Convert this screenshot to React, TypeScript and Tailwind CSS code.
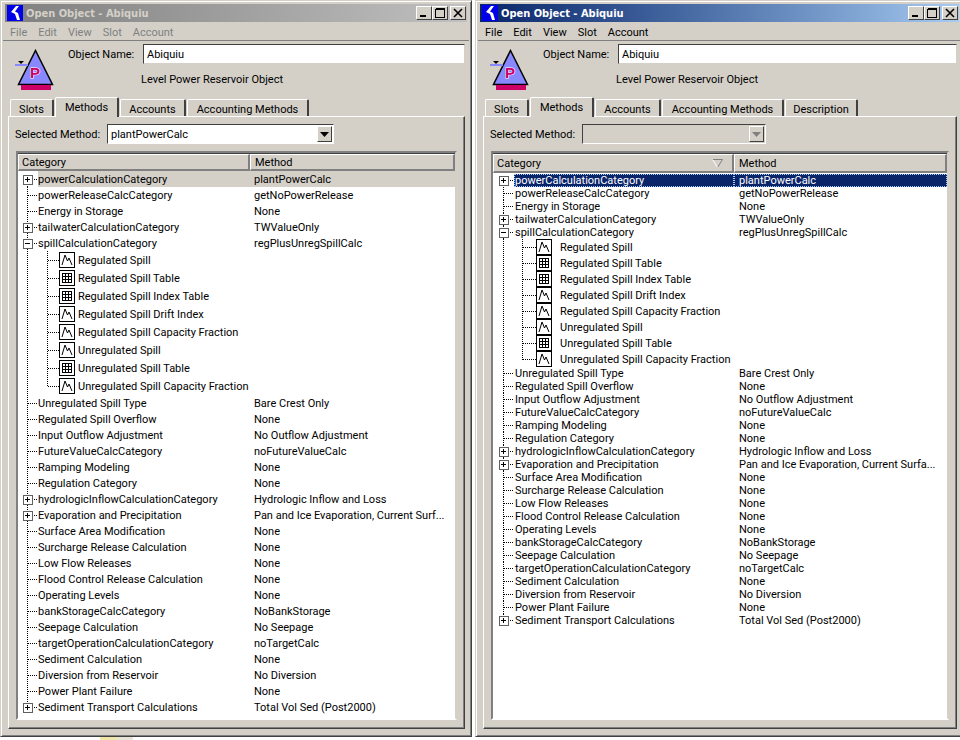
const FONT = "font-['Roboto','Liberation_Sans',Arial,sans-serif]"

type Child = { name: string; icon: "graph" | "table" }
type Row = { name: string; method: string; expander?: "plus" | "minus"; children?: Child[] }

const spillChildren: Child[] = [
  { name: "Regulated Spill", icon: "graph" },
  { name: "Regulated Spill Table", icon: "table" },
  { name: "Regulated Spill Index Table", icon: "table" },
  { name: "Regulated Spill Drift Index", icon: "graph" },
  { name: "Regulated Spill Capacity Fraction", icon: "graph" },
  { name: "Unregulated Spill", icon: "graph" },
  { name: "Unregulated Spill Table", icon: "table" },
  { name: "Unregulated Spill Capacity Fraction", icon: "graph" },
]

const rows = (evapMethod: string): Row[] => [
  { name: "powerCalculationCategory", method: "plantPowerCalc", expander: "plus" },
  { name: "powerReleaseCalcCategory", method: "getNoPowerRelease" },
  { name: "Energy in Storage", method: "None" },
  { name: "tailwaterCalculationCategory", method: "TWValueOnly", expander: "plus" },
  { name: "spillCalculationCategory", method: "regPlusUnregSpillCalc", expander: "minus", children: spillChildren },
  { name: "Unregulated Spill Type", method: "Bare Crest Only" },
  { name: "Regulated Spill Overflow", method: "None" },
  { name: "Input Outflow Adjustment", method: "No Outflow Adjustment" },
  { name: "FutureValueCalcCategory", method: "noFutureValueCalc" },
  { name: "Ramping Modeling", method: "None" },
  { name: "Regulation Category", method: "None" },
  { name: "hydrologicInflowCalculationCategory", method: "Hydrologic Inflow and Loss", expander: "plus" },
  { name: "Evaporation and Precipitation", method: evapMethod, expander: "plus" },
  { name: "Surface Area Modification", method: "None" },
  { name: "Surcharge Release Calculation", method: "None" },
  { name: "Low Flow Releases", method: "None" },
  { name: "Flood Control Release Calculation", method: "None" },
  { name: "Operating Levels", method: "None" },
  { name: "bankStorageCalcCategory", method: "NoBankStorage" },
  { name: "Seepage Calculation", method: "No Seepage" },
  { name: "targetOperationCalculationCategory", method: "noTargetCalc" },
  { name: "Sediment Calculation", method: "None" },
  { name: "Diversion from Reservoir", method: "No Diversion" },
  { name: "Power Plant Failure", method: "None" },
  { name: "Sediment Transport Calculations", method: "Total Vol Sed (Post2000)", expander: "plus" },
]

function Logo() {
  return (
    <svg width="16" height="16" viewBox="0 0 16 16" className="shrink-0">
      <rect width="16" height="16" fill="#0000e8" />
      <path d="M9 1 L4 7 L8 9 L10 15 L13 15 L11 8 L8 6.5 L12 1 Z" fill="#fff" />
    </svg>
  )
}

function ObjectIcon() {
  return (
    <svg width="40" height="42" viewBox="0 0 40 42" className="shrink-0">
      <path d="M20.5 1.5 L37.5 35.5 L3.5 35.5 Z" fill="#8888ff" stroke="#000" strokeWidth="1.5" />
      <rect x="6" y="36" width="30" height="5" fill="#cc0066" />
      <rect x="0" y="15" width="13" height="2" fill="#8888ff" />
      <path d="M3 12 H9 L6 15 Z" fill="#000" />
      <text x="15" y="29" fontSize="15" fontWeight="700" fill="#cc0066" stroke="#fff" strokeWidth="1" paintOrder="stroke" fontFamily="Liberation Sans, sans-serif">P</text>
    </svg>
  )
}

function WinButton({ kind }: { kind: "min" | "max" | "close" }) {
  return (
    <div className="w-[16px] h-[14px] bg-[#d4d0c8] border border-t-white border-l-white border-r-[#404040] border-b-[#404040] flex items-center justify-center">
      <svg width="10" height="10" viewBox="0 0 10 10" shapeRendering="crispEdges">
        {kind === "min" && <rect x="1" y="7" width="6" height="2" fill="#000" />}
        {kind === "max" && <path d="M0.5 1.5 H9.5 V9.5 H0.5 Z M0.5 0.5 H9.5" fill="none" stroke="#000" />}
        {kind === "close" && <path d="M1 1 L9 9 M9 1 L1 9" stroke="#000" strokeWidth="1.6" shapeRendering="auto" />}
      </svg>
    </div>
  )
}

function SeriesIcon({ icon }: { icon: "graph" | "table" }) {
  return (
    <svg width="16" height="16" viewBox="0 0 16 16" className="shrink-0" shapeRendering="crispEdges">
      <rect x="0.5" y="0.5" width="15" height="15" fill="#fff" stroke="#000" />
      {icon === "graph" ? (
        <path d="M3 13 L6 3 L8.5 9 L10 6 L13 13" fill="none" stroke="#000" shapeRendering="auto" />
      ) : (
        <path d="M3.5 3.5 H12.5 V12.5 H3.5 Z M3.5 6.5 H12.5 M3.5 9.5 H12.5 M6.5 3.5 V12.5 M9.5 3.5 V12.5" fill="none" stroke="#000" />
      )}
    </svg>
  )
}

// dotted tree lines + the expander box, drawn per row so rows can keep normal flow
function Gutter({
  width, height, axis, first, last, expander,
}: {
  width: number; height: number; axis: number; first?: boolean; last?: boolean; expander?: "plus" | "minus"
}) {
  const mid = Math.floor(height / 2) + 0.5
  const dots = { stroke: "#000", strokeDasharray: "1 1", fill: "none" }
  return (
    <svg width={width} height={height} className="shrink-0" shapeRendering="crispEdges">
      <path d={`M${axis + 0.5} ${first ? mid : 0} V${last ? mid : height}`} {...dots} />
      <path d={`M${axis + 0.5} ${mid} H${width}`} {...dots} />
      {expander && (
        <g>
          <rect x={axis - 4} y={mid - 4.5} width="9" height="9" fill="#fff" stroke="#606060" transform="translate(0.5 0)" />
          <path d={`M${axis - 2} ${mid} H${axis + 3}`} stroke="#000" />
          {expander === "plus" && <path d={`M${axis + 0.5} ${mid - 2.5} V${mid + 2.5}`} stroke="#000" />}
        </g>
      )}
    </svg>
  )
}

function ChildGutter({
  height, axis, sub, iconX, last,
}: {
  height: number; axis: number; sub: number; iconX: number; last: boolean
}) {
  const mid = Math.floor(height / 2) + 0.5
  const dots = { stroke: "#000", strokeDasharray: "1 1", fill: "none" }
  return (
    <svg width={iconX} height={height} className="shrink-0" shapeRendering="crispEdges">
      <path d={`M${axis + 0.5} 0 V${height}`} {...dots} />
      <path d={`M${sub + 0.5} 0 V${last ? mid : height}`} {...dots} />
      <path d={`M${sub + 0.5} ${mid} H${iconX}`} {...dots} />
    </svg>
  )
}

function Tab({ label, active, width }: { label: string; active?: boolean; width: string }) {
  if (active) {
    return (
      <div className={`${width} h-[20px] -mb-px relative z-10 bg-[#d4d0c8] border-t border-l border-white border-r-2 border-r-[#404040] rounded-t-[2px] flex items-center justify-center`}>
        {label}
      </div>
    )
  }
  return (
    <div className={`${width} h-[17px] bg-[#d4d0c8] border-t border-l border-white border-r-2 border-r-[#404040] rounded-t-[2px] flex items-center justify-center pt-[2px]`}>
      {label}
    </div>
  )
}

function Window({ focused }: { focused: boolean }) {
  // the two windows differ in tree density and focus state
  const rowH = focused ? 13 : 16
  const childH = focused ? 16 : 18
  const catW = focused ? "w-[241px]" : "w-[232px]"
  const gutterW = focused ? 21 : 20
  const axis = focused ? 10 : 9
  const sub = 29
  const iconX = focused ? 43 : 41
  const childLabel = focused ? "ml-[8px]" : "ml-[3px]"
  const data = rows(focused ? "Pan and Ice Evaporation, Current Surfa..." : "Pan and Ice Evaporation, Current Surf...")
  const menuText = focused ? "text-black" : "text-[#808080]"

  return (
    <div className={`${focused ? "w-[489px]" : "w-[472px]"} h-[737px] shrink-0 flex flex-col bg-[#d4d0c8] border border-t-[#d4d0c8] border-l-[#d4d0c8] border-r-[#404040] border-b-[#404040] shadow-[inset_1px_1px_0_#fff,inset_-1px_-1px_0_#808080] pt-[3px] pl-[4px] pr-[4px] pb-[1px]`}>
      <div className={`h-[18px] shrink-0 flex items-center pl-[2px] pr-[1px] ${focused ? "bg-gradient-to-r from-[#0a246a] to-[#a6caf0]" : "bg-gradient-to-r from-[#808080] to-[#c0c0c0]"}`}>
        <Logo />
        <span className={`ml-[3px] font-['DejaVu_Sans_Condensed','DejaVu_Sans',sans-serif] font-bold text-[11px] ${focused ? "text-white" : "text-[#d4d0c8]"}`}>Open Object - Abiquiu</span>
        <div className="ml-auto flex items-center">
          <WinButton kind="min" />
          <WinButton kind="max" />
          <div className="w-[2px]" />
          <WinButton kind="close" />
        </div>
      </div>

      <div className={`h-[18px] shrink-0 flex items-center pl-[5px] pt-[2px] gap-[11px] ${menuText}`}>
        <span>File</span>
        <span>Edit</span>
        <span>View</span>
        <span>Slot</span>
        <span>Account</span>
      </div>
      <div className="h-[2px] shrink-0 border-t border-[#808080] border-b-white -mx-[2px]" />

      <div className="flex shrink-0 h-[55px]">
        <div className="pl-[10px] pt-[7px] w-[63px]">
          <ObjectIcon />
        </div>
        <div className="flex-1 flex flex-col">
          <div className="flex items-center pt-[2px]">
            <span className="w-[75px]">Object Name:</span>
            <div className="flex-1 h-[20px] mr-[2px] bg-white border border-t-[#404040] border-l-[#404040] border-r-[#d4d0c8] border-b-[#d4d0c8] flex items-center pl-[3px]">Abiquiu</div>
          </div>
          <div className="pl-[73px] mt-[10px]">Level Power Reservoir Object</div>
        </div>
      </div>

      <div className="flex items-end shrink-0 pl-[5px] gap-[1px] h-[19px]">
        <Tab label="Slots" width="w-[44px]" />
        <Tab label="Methods" width="w-[64px]" active />
        <Tab label="Accounts" width="w-[66px]" />
        <Tab label="Accounting Methods" width="w-[122px]" />
        {focused && <Tab label="Description" width="w-[73px]" />}
      </div>

      <div className="flex-1 min-h-0 flex flex-col ml-[3px] mr-[2px] mb-[6px] border border-t-white border-l-white border-r-[#404040] border-b-[#404040] shadow-[inset_-1px_-1px_0_#808080] pt-[7px] pl-[6px] pr-[7px] pb-[8px]">
        <div className="flex items-center shrink-0 h-[20px]">
          <span className="w-[92px]">Selected Method:</span>
          <div className={`${focused ? "w-[184px]" : "w-[227px]"} h-[20px] flex items-center justify-between pl-[3px] border border-t-[#404040] border-l-[#404040] border-r-white border-b-white ${focused ? "bg-[#d4d0c8]" : "bg-white"}`}>
            <span>{focused ? "" : "plantPowerCalc"}</span>
            <div className="w-[15px] h-[16px] mr-[1px] flex items-center justify-center border border-t-white border-l-white border-r-[#404040] border-b-[#404040] bg-[#d4d0c8]">
              <svg width="9" height="5" viewBox="0 0 9 5">
                <path d="M0 0 H9 L4.5 5 Z" fill={focused ? "#808080" : "#000"} />
              </svg>
            </div>
          </div>
        </div>

        <div className="flex-1 min-h-0 mt-[7px] ml-[1px] flex flex-col border-2 border-t-[#808080] border-l-[#808080] border-r-[#d4d0c8] border-b-white shadow-[inset_0_1px_0_#404040,inset_1px_0_0_#404040]">
          <div className={`flex shrink-0 ${focused ? "h-[19px]" : "h-[17px]"} mt-px bg-[#d4d0c8]`}>
            <div className={`${catW} flex items-center justify-between pl-[3px] pr-[9px] border-r-2 border-r-[#808080] border-b-2 border-b-[#808080] border-t border-t-white border-l border-l-white`}>
              <span>Category</span>
              {focused && (
                <svg width="11" height="9" viewBox="0 0 11 9">
                  <path d="M0.5 0.5 H10.5 L5.5 8.5" fill="none" stroke="#808080" />
                  <path d="M0.5 0.5 L5.5 8.5" fill="none" stroke="#fff" />
                </svg>
              )}
            </div>
            <div className="flex-1 flex items-center pl-[4px] border-r-2 border-r-[#808080] border-b-2 border-b-[#808080] border-t border-t-white border-l border-l-white">Method</div>
          </div>

          <div className={`flex-1 min-h-0 bg-white ${focused ? "pt-[1px]" : ""}`}>
            {data.map((row, i) => {
              const selected = i === 0
              return (
                <div key={row.name}>
                  <div className="flex" style={{ height: rowH }}>
                    <div className={`${catW} flex shrink-0`}>
                      <Gutter width={gutterW} height={rowH} axis={axis} first={i === 0} last={i === data.length - 1} expander={row.expander} />
                      <span className={`flex-1 flex items-center whitespace-nowrap ${selected ? (focused ? "bg-[#0a246a] text-white outline-1 outline-dotted outline-offset-[-1px] outline-[#a6caf0]" : "bg-[#d4d0c8]") : ""} ${focused ? "pl-[1px]" : ""}`}>{row.name}</span>
                    </div>
                    <span className={`flex-1 flex items-center whitespace-nowrap pl-[4px] ${focused ? "pl-[5px]" : ""} ${selected ? (focused ? "bg-[#0a246a] text-white outline-1 outline-dotted outline-offset-[-1px] outline-[#a6caf0]" : "bg-[#d4d0c8]") : ""}`}>{row.method}</span>
                  </div>
                  {row.children?.map((c, j) => (
                    <div key={c.name} className="flex items-center" style={{ height: childH }}>
                      <ChildGutter height={childH} axis={axis} sub={sub} iconX={iconX} last={j === spillChildren.length - 1} />
                      <SeriesIcon icon={c.icon} />
                      <span className={`${childLabel} whitespace-nowrap`}>{c.name}</span>
                    </div>
                  ))}
                </div>
              )
            })}
          </div>
        </div>
      </div>
    </div>
  )
}

export default function App() {
  return (
    <div className={`${FONT} text-[11px] leading-none text-black w-[960px] h-[740px] overflow-hidden bg-white`}>
      <div className="flex gap-[3px]">
        <Window focused={false} />
        <Window focused />
      </div>
      <div className="ml-[100px] w-[33px] h-[3px] flex">
        <div className="flex-1 bg-[#f0e6a8]" />
        <div className="flex-1 bg-[#e8e4d8]" />
      </div>
    </div>
  )
}
